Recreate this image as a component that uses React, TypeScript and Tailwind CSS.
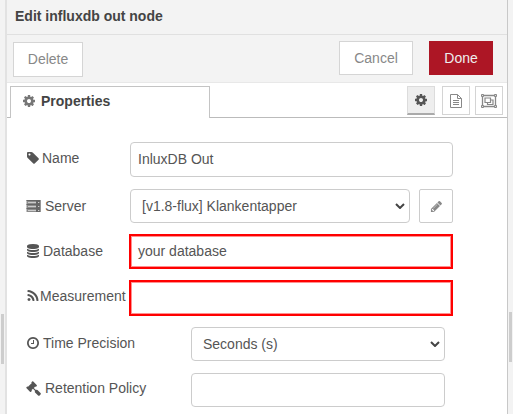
import type { ReactNode } from "react";

const COG =
  "M1152 896q0-106-75-181t-181-75-181 75-75 181 75 181 181 75 181-75 75-181zm512-109v222q0 12-8 23t-20 13l-185 28q-19 54-39 91 35 50 107 138 10 12 10 25t-9 23q-27 37-99 108t-94 71q-12 0-26-9l-138-108q-44 23-91 38-16 136-29 186-7 28-36 28h-222q-14 0-24.5-8.5t-11.5-21.5l-28-184q-49-16-90-37l-141 107q-10 9-25 9-14 0-25-11-126-114-165-168-7-10-7-23 0-12 8-23 15-21 51-66.5t54-70.5q-27-50-41-99l-183-27q-13-2-21-12.5t-8-23.5v-222q0-12 8-23t19-13l186-28q14-46 39-92-40-57-107-138-10-12-10-24 0-10 9-23 26-36 98.5-107.5t94.5-71.5q13 0 26 10l138 107q44-23 91-38 16-136 29-186 7-28 36-28h222q14 0 24.5 8.5t11.5 21.5l28 184q49 16 90 37l142-107q9-9 24-9 13 0 25 10 129 119 165 170 7 8 7 22 0 12-8 23-15 21-51 66.5t-54 70.5q26 50 41 98l183 28q13 2 21 12.5t8 23.5z";
const TAG =
  "M576 448q0-53-37.5-90.5t-90.5-37.5-90.5 37.5-37.5 90.5 37.5 90.5 90.5 37.5 90.5-37.5 37.5-90.5zm1067 576q0 53-37 90l-491 492q-39 37-91 37-53 0-90-37l-715-716q-38-37-64.5-101t-26.5-117v-416q0-52 38-90t90-38h416q53 0 117 26.5t102 64.5l715 714q37 39 37 91z";
const DATABASE =
  "M896 768q237 0 443-43t325-127v170q0 69-103 128t-280 93.5-385 34.5-385-34.5-280-93.5-103-128v-170q119 84 325 127t443 43zm0 768q237 0 443-43t325-127v170q0 69-103 128t-280 93.5-385 34.5-385-34.5-280-93.5-103-128v-170q119 84 325 127t443 43zm0-384q237 0 443-43t325-127v170q0 69-103 128t-280 93.5-385 34.5-385-34.5-280-93.5-103-128v-170q119 84 325 127t443 43zm0-1152q208 0 385 34.5t280 93.5 103 128v128q0 69-103 128t-280 93.5-385 34.5-385-34.5-280-93.5-103-128v-128q0-69 103-128t280-93.5 385-34.5z";
const RSS =
  "M576 1344q0 80-56 136t-136 56-136-56-56-136 56-136 136-56 136 56 56 136zm512 123q2 28-17 48-18 21-47 21h-135q-25 0-43-16.5t-20-41.5q-22-229-184.5-391.5t-391.5-184.5q-25-2-41.5-20t-16.5-43v-135q0-29 21-47 17-17 43-17h5q160 13 306 80.5t259 181.5q114 113 181.5 259t80.5 306zm512 2q2 27-18 47-18 20-46 20h-143q-26 0-44.5-17.5t-19.5-42.5q-12-215-101-408.5t-231.5-336-336-231.5-408.5-102q-25-1-42.5-19.5t-17.5-43.5v-143q0-28 20-46 18-18 44-18h3q262 13 501.5 120t425.5 294q187 186 294 425.5t120 501.5z";
const CLOCK =
  "M1024 544v448q0 14-9 23t-23 9h-320q-14 0-23-9t-9-23v-64q0-14 9-23t23-9h224v-352q0-14 9-23t23-9h64q14 0 23 9t9 23zm416 352q0-148-73-273t-198-198-273-73-273 73-198 198-73 273 73 273 198 198 273 73 273-73 198-198 73-273zm224 0q0 209-103 385.5t-279.5 279.5-385.5 103-385.5-103-279.5-279.5-103-385.5 103-385.5 279.5-279.5 385.5-103 385.5 103 279.5 279.5 103 385.5z";
const GAVEL =
  "M1771 1536q0 53-37 90l-107 108q-39 37-91 37-53 0-90-37l-363-364q-38-36-38-90 0-53 43-96l-256-256-126 126q-14 14-34 14t-34-14q2 2 12.5 12t12.5 13 10 11.5 10 13.5 6 13.5 5.5 16.5 1.5 18q0 38-28 68-3 3-16.5 18t-19 20.5-18.5 16.5-22 15.5-22 9-26 4.5q-40 0-68-28l-408-408q-28-28-28-68 0-13 4.5-26t9-22 15.5-22 16.5-18.5 20.5-19 18-16.5q30-28 68-28 10 0 18 1.5t16.5 5.5 13.5 6 13.5 10 11.5 10 13 12.5 12 12.5q-14-14-14-34t14-34l348-348q14-14 34-14t34 14q-2-2-12.5-12t-12.5-13-10-11.5-10-13.5-6-13.5-5.5-16.5-1.5-18q0-38 28-68 3-3 16.5-18t19-20.5 18.5-16.5 22-15.5 22-9 26-4.5q40 0 68 28l408 408q28 28 28 68 0 13-4.5 26t-9 22-15.5 22-16.5 18.5-20.5 19-18 16.5q-30 28-68 28-10 0-18-1.5t-16.5-5.5-13.5-6-13.5-10-11.5-10-13-12.5-12-12.5q14 14 14 34t-14 34l-126 126 256 256q43-43 96-43 52 0 91 37l363 363q37 39 37 91z";
const PENCIL =
  "M491 1536l91-91-235-235-91 91v107h128v128h107zm523-928q0-22-22-22-10 0-17 7l-542 542q-7 7-7 17 0 22 22 22 10 0 17-7l542-542q7-7 7-17zm-54-192l416 416-832 832h-416v-416zm683 96q0 53-37 90l-166 166-416-416 166-165q36-38 90-38 53 0 91 38l235 234q37 39 37 91z";

function Glyph({ d, className = "size-[14px]" }: { d: string; className?: string }) {
  return (
    <svg viewBox="0 0 1792 1792" fill="currentColor" className={`shrink-0 ${className}`}>
      <path d={d} />
    </svg>
  );
}

/* Rack of three units with a status light on each */
function ServerIcon() {
  return (
    <svg viewBox="0 0 15 12" className="h-[12px] w-[15px] shrink-0">
      <path fill="#8c8c8c" d="M.5 0h14v12H.5z" />
      <path fill="#666" d="M.5 0h14v1H.5zM.5 4h14v1H.5zM.5 8h14v1H.5zM10 0h4.5v12H10z" />
      <path fill="#ccc" d="M2 2h8v1H2zM2 6h8v1H2zM2 10h8v1H2zM12 2h1.3v1H12zM12 6h1.3v1H12zM12 10h1.3v1H12z" />
    </svg>
  );
}

function Chevron() {
  return (
    <svg viewBox="0 0 10 6" className="h-[6px] w-[10px]" fill="none" stroke="#444" strokeWidth="2">
      <path d="M1 1l4 4 4-4" />
    </svg>
  );
}

function Row({ icon, label, labelClass, wide, className, children }: {
  icon: ReactNode;
  label: string;
  labelClass: string;
  wide?: boolean;
  className: string;
  children: ReactNode;
}) {
  return (
    <div className={`flex items-center ${className}`}>
      <div className={`flex shrink-0 items-center whitespace-nowrap ${labelClass} ${wide ? "w-[165px]" : "w-[104px]"}`}>
        {icon}
        <span>{label}</span>
      </div>
      {children}
    </div>
  );
}

function Handle() {
  return <div className="h-[50px] w-[3px] bg-[#cdcdcd]" />;
}

export default function App() {
  return (
    <div className="flex h-[414px] w-[513px] overflow-hidden bg-[#f3f3f3] font-['Liberation_Sans',Arial,sans-serif] text-[14px] leading-5 text-[#555]">
      <div className="w-[7px] shrink-0 border-r-2 border-[#e2e2e2] pl-px pt-[314px]">
        <Handle />
      </div>

      <div className="flex w-[500px] shrink-0 flex-col bg-white">
        <div className="flex h-[35px] items-center border-b border-[#e0e0e0] bg-[#f3f3f3] pb-[3px] pl-2 font-bold text-[#444]">
          Edit influxdb out node
        </div>
        <div className="flex h-[48px] items-start border-b border-[#e8e8e8] bg-[#f3f3f3] pl-[6px] pr-[14px] pt-[6px] text-[#888]">
          <button className="mt-px h-[35px] w-[70px] border border-[#d5d5d5] bg-white pb-[2px]">Delete</button>
          <button className="ml-auto h-[34px] w-[74px] border border-[#d5d5d5] bg-white">Cancel</button>
          <button className="ml-4 h-[34px] w-[64px] bg-[#ad1625] text-[#eee]">Done</button>
        </div>

        <div className="flex h-[35px] shrink-0 items-end">
          <div className="h-full w-[3px] border-b border-[#bbb]" />
          <div className="flex h-[32px] w-[200px] items-center gap-[5px] border-x border-t border-[#c4c4c4] pb-[4px] pl-[11px] font-bold text-[#444]">
            <Glyph d={COG} className="size-[14px] text-[#777]" />
            <span>Properties</span>
          </div>
          <div className="flex h-full flex-1 items-start justify-end border-b border-[#bbb] pr-[4px] pt-[3px] text-[#888]">
            <button className="mr-[7px] flex h-[29px] w-[28px] items-center justify-center border border-b-2 border-[#dcdcdc] border-b-[#aaa] bg-[#eee] text-[#555]">
              <Glyph d={COG} />
            </button>
            <button className="mr-[5px] flex h-[29px] w-[28px] items-center justify-center border border-[#d4d4d4]">
              <svg viewBox="0 0 12 14" className="h-[14px] w-[12px]" fill="none" stroke="currentColor">
                <path d="M.5.5h7l4 4v9H.5zM7.5.5v4h4M3 6.5h6M3 8.5h6M3 10.5h6" />
              </svg>
            </button>
            <button className="flex h-[29px] w-[28px] items-center justify-center border border-[#d4d4d4]">
              <svg viewBox="0 0 16 14" className="h-[14px] w-[16px]" fill="none" stroke="currentColor">
                <path strokeWidth="1.3" d="M2 1.5h12M2 12.5h12M1.5 2v10M14.5 2v10" />
                <path strokeWidth="1.2" d="M4 4h5.5v4.5H4zM9.5 6H12v4.5H6.5v-2" />
                <path fill="#ddd" d="M.5.5h2v2h-2zM13.5.5h2v2h-2zM.5 11.5h2v2h-2zM13.5 11.5h2v2h-2z" />
              </svg>
            </button>
          </div>
        </div>

        <div className="flex flex-col pl-[19px] pt-[24px]">
          <Row icon={<Glyph d={TAG} />} label="Name" labelClass="gap-[2px] pb-[3px]" className="h-[35px]">
            <div className="flex h-[35px] w-[323px] items-center rounded-[4px] border border-[#ccc] pb-px pl-[7px]">InluxDB Out</div>
          </Row>
          <Row icon={<ServerIcon />} label="Server" labelClass="gap-[4px]" className="mt-[12px] h-[34px]">
            <div className="flex h-[34px] w-[280px] items-center justify-between rounded-[4px] border border-[#ccc] pl-[11px] pr-1">
              <span>[v1.8-flux] Klankentapper</span>
              <Chevron />
            </div>
            <button className="ml-[9px] flex h-[34px] w-[34px] items-center justify-center rounded-[2px] border border-[#ccc] text-[#888]">
              <Glyph d={PENCIL} className="size-[13px]" />
            </button>
          </Row>
          <Row icon={<Glyph d={DATABASE} />} label="Database" labelClass="gap-[3px] pb-[2px]" className="mt-[11px] h-[35px]">
            <div className="-ml-px flex h-[35px] w-[324px] items-center border-2 border-[#ff0000] pb-px pl-[7px] shadow-[inset_0_0_0_1px_#ff9090]">your database</div>
          </Row>
          <Row icon={<Glyph d={RSS} />} label="Measurement" labelClass="gap-0 pb-[4px]" className="mt-[11px] h-[36px]">
            <div className="-ml-px h-[36px] w-[324px] border-2 border-[#ff0000] shadow-[inset_0_0_0_1px_#ff9090]" />
          </Row>
          <Row icon={<Glyph d={CLOCK} />} label="Time Precision" labelClass="gap-[3px] pb-[2px]" wide className="mt-[11px] h-[34px]">
            <div className="flex h-[34px] w-[254px] items-center justify-between rounded-[4px] border border-[#ccc] pl-[11px] pr-1">
              <span>Seconds (s)</span>
              <Chevron />
            </div>
          </Row>
          <Row icon={<Glyph d={GAVEL} className="size-[15px]" />} label="Retention Policy" labelClass="gap-[4px] pb-[4px]" wide className="mt-[12px] h-[34px]">
            <div className="h-[34px] w-[254px] rounded-[4px] border border-[#ccc]" />
          </Row>
        </div>
      </div>

      <div className="flex flex-1 justify-center border-l border-[#c8c8c8] pt-[312px]">
        <Handle />
      </div>
    </div>
  );
}
